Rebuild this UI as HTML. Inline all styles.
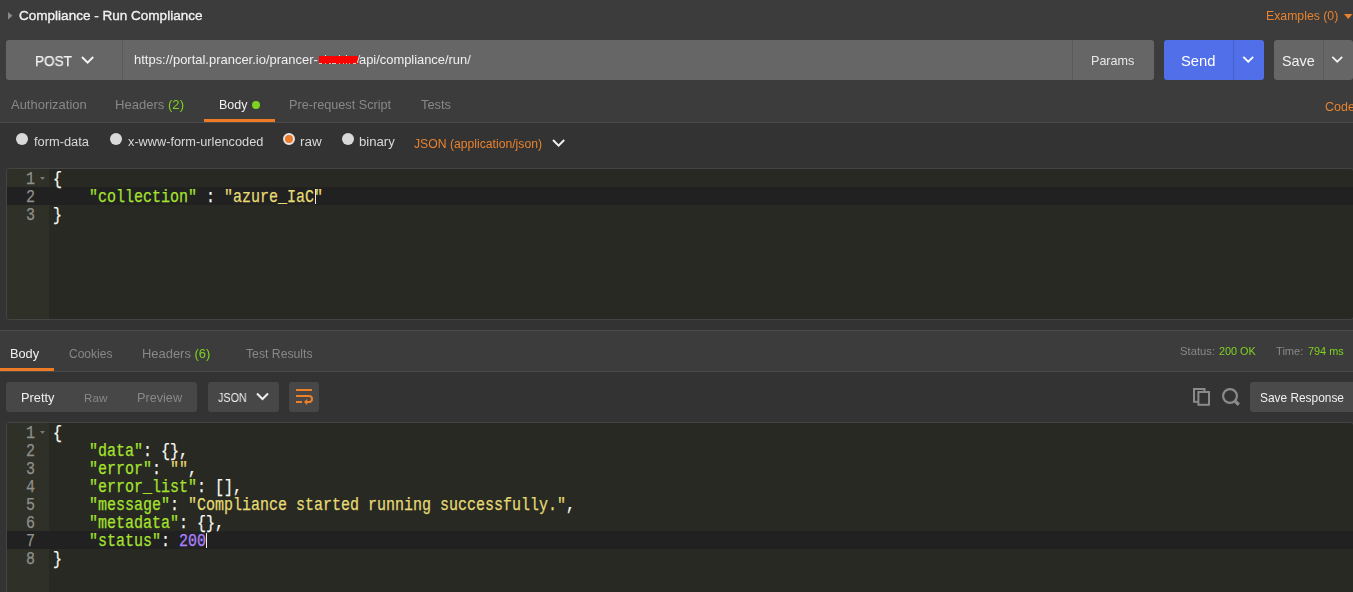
<!DOCTYPE html>
<html><head><meta charset="utf-8">
<style>
*{box-sizing:border-box;margin:0;padding:0}
html,body{width:1353px;height:592px;overflow:hidden;background:#333;font-family:"Liberation Sans",sans-serif;}
.abs{position:absolute;white-space:nowrap}
#top{position:absolute;left:0;top:0;width:1353px;height:123px;background:#3c3c3c}
#topline{position:absolute;left:0;top:122px;width:1353px;height:1px;background:#4a4a4a}
.t{position:absolute;white-space:nowrap;line-height:1;will-change:transform}
.method{position:absolute;left:6px;top:40px;width:116px;height:40px;background:#666;border-radius:3px 0 0 3px}
.url{position:absolute;left:122px;top:40px;width:950px;height:40px;background:#666;border-left:1px solid #5a5a5a}
.params{position:absolute;left:1072px;top:40px;width:82px;height:40px;background:#666;border-left:1px solid #5a5a5a;border-radius:0 3px 3px 0}
.send{position:absolute;left:1164px;top:40px;width:100px;height:40px;background:#516fe9;border-radius:3px}
.sendsplit{position:absolute;left:1233px;top:40px;width:1px;height:40px;background:#4460cf}
.save{position:absolute;left:1274px;top:40px;width:79px;height:40px;background:#666;border-radius:3px}
.savesplit{position:absolute;left:1323px;top:40px;width:1px;height:40px;background:#5a5a5a}
.editor{position:absolute;background:#282923;border:1px solid #444;border-radius:3px;overflow:hidden}
.gutter{position:absolute;left:0;top:0;bottom:0;width:42px;background:#2f3129}
.code{font-family:"Liberation Mono",monospace;font-size:18px;line-height:18px;-webkit-text-stroke:0.25px currentColor}
.ln{position:absolute;color:#8f908a;text-align:right;padding-top:1px;transform:scaleX(0.8333);transform-origin:right top}
.cl{position:absolute;white-space:pre;color:#f8f8f2;padding-top:1px;transform:scaleX(0.8333);transform-origin:left top}
.k{color:#a6e22e}.s{color:#e6db74}.n{color:#ae81ff}
#resp{position:absolute;left:0;top:330px;width:1353px;height:42px;background:#3c3c3c;border-top:1px solid #4a4a4a;border-bottom:1px solid #4a4a4a}
.btn{position:absolute;background:#474747;border-radius:3px}
.radio{width:12px;height:12px;border-radius:50%;background:#d9d9d9}
.radio.on{background:#ec7b2c;border:2px solid #e6e6e6}
</style></head><body>
<div id="top"></div><div id="topline"></div>
<svg class="abs" style="left:8px;top:12px" width="6" height="8"><path d="M0 0 L4.5 3.8 L0 7.6Z" fill="#8a8a8a"/></svg>
<div class="t" id="title" style="left:19.00px;top:9.35px;font-size:13.54px;color:#f0f0f0;-webkit-text-stroke:0.35px #f0f0f0;">Compliance - Run Compliance</div>
<div class="t" id="examples" style="left:1265.72px;top:9.75px;font-size:12.28px;color:#e8822e;">Examples (0)</div>
<svg class="abs" style="left:1344px;top:14px" width="9" height="6"><path d="M0 0 L8.5 0 L4.25 5Z" fill="#e8822e"/></svg>
<div class="method"></div><div class="url"></div><div class="params"></div>
<div class="t" id="post" style="left:34.80px;top:54.45px;font-size:14.00px;color:#f2f2f2;-webkit-text-stroke:0.25px #f2f2f2;transform:scaleX(0.97);transform-origin:0 0;">POST</div>
<svg class="abs" style="left:81px;top:55px" width="14" height="10"><path d="M1 2 L6.6 7.6 L12.2 2" stroke="#f2f2f2" stroke-width="2" fill="none"/></svg>
<div class="t" id="url1" style="left:133.85px;top:52.50px;font-size:12.98px;color:#f0f0f0;">https://portal.prancer.io/prancer-</div>
<div class="t" id="url2" style="left:359.30px;top:53.50px;font-size:12.90px;color:#f0f0f0;">api/compliance/run/</div>
<div class="abs" style="left:318.6px;top:56px;width:39.6px;height:7.7px;background:#f00;box-shadow:0 0 0 0.6px #5a6a6a"></div>
<div class="abs" style="left:325px;top:55px;width:1.2px;height:1.3px;background:#e8e8e8"></div>
<div class="abs" style="left:339px;top:55px;width:1.2px;height:1.3px;background:#e8e8e8"></div>
<div class="abs" style="left:346px;top:55px;width:1.2px;height:1.3px;background:#e8e8e8"></div>
<div class="abs" style="left:319px;top:63.2px;width:3px;height:1px;background:#c8c8c8"></div>
<div class="abs" style="left:325px;top:63.2px;width:1px;height:1px;background:#c8c8c8"></div>
<div class="abs" style="left:329px;top:63.2px;width:2px;height:1px;background:#c8c8c8"></div>
<div class="abs" style="left:332px;top:63.2px;width:3.5px;height:1px;background:#c8c8c8"></div>
<div class="abs" style="left:339px;top:63.2px;width:1px;height:1px;background:#c8c8c8"></div>
<div class="abs" style="left:343px;top:63.2px;width:1.2px;height:1px;background:#c8c8c8"></div>
<div class="abs" style="left:346px;top:63.2px;width:1px;height:1px;background:#c8c8c8"></div>
<div class="abs" style="left:349px;top:63.2px;width:1px;height:1px;background:#c8c8c8"></div>
<div class="abs" style="left:353px;top:63.2px;width:3px;height:1px;background:#c8c8c8"></div>
<div class="abs" style="left:358.3px;top:55px;width:1.2px;height:8px;background:#e0e0e0;transform:skewX(-18deg)"></div>
<div class="t" id="params" style="left:1090.96px;top:55.15px;font-size:12.57px;color:#e8e8e8;">Params</div>
<div class="send"></div><div class="sendsplit"></div>
<div class="t" id="send" style="left:1180.87px;top:53.65px;font-size:14.78px;color:#fff;">Send</div>
<svg class="abs" style="left:1242px;top:55px" width="13" height="9"><path d="M1.3 1.9 L6.25 6.7 L11.2 1.9" stroke="#fff" stroke-width="1.8" fill="none"/></svg>
<div class="save"></div><div class="savesplit"></div>
<div class="t" id="save" style="left:1282.24px;top:54.40px;font-size:14.40px;color:#f2f2f2;">Save</div>
<svg class="abs" style="left:1331px;top:55px" width="13" height="9"><path d="M1.3 1.9 L6.25 6.7 L11.2 1.9" stroke="#f2f2f2" stroke-width="1.8" fill="none"/></svg>
<div class="t" id="auth" style="left:11.00px;top:97.50px;font-size:12.98px;color:#888;">Authorization</div>
<div class="t" id="headers" style="left:115.25px;top:98.25px;font-size:13.07px;color:#888;">Headers <span style="color:#7ed321">(2)</span></div>
<div class="t" id="body" style="left:218.61px;top:99.25px;font-size:12.46px;color:#f0f0f0;">Body</div>
<div class="t" id="prereq" style="left:289.19px;top:98.95px;font-size:12.68px;color:#888;">Pre-request Script</div>
<div class="t" id="tests" style="left:420.94px;top:99.20px;font-size:12.85px;color:#888;">Tests</div>
<div class="t" id="codebtn" style="left:1325.10px;top:101.00px;font-size:12.50px;color:#e8822e;">Code</div>
<div class="abs" style="left:252px;top:101px;width:8px;height:8px;border-radius:50%;background:#7ed321"></div>
<div class="abs" style="left:204px;top:119px;width:71px;height:3px;background:#f07b27"></div>
<div class="abs radio" style="left:16px;top:133px"></div>
<div class="abs radio" style="left:110px;top:133px"></div>
<div class="abs radio on" style="left:283px;top:133px"></div>
<div class="abs radio" style="left:342px;top:133px"></div>
<div class="t" id="formdata" style="left:34.29px;top:136.05px;font-size:12.85px;color:#d8d8d8;">form-data</div>
<div class="t" id="urlenc" style="left:128.04px;top:136.15px;font-size:12.76px;color:#d8d8d8;">x-www-form-urlencoded</div>
<div class="t" id="raw" style="left:300.19px;top:135.00px;font-size:13.46px;color:#d8d8d8;">raw</div>
<div class="t" id="binary" style="left:359.21px;top:134.65px;font-size:13.16px;color:#d8d8d8;">binary</div>
<div class="t" id="jsonapp" style="left:414.21px;top:138.00px;font-size:12.19px;color:#e8822e;">JSON (application/json)</div>
<svg class="abs" style="left:552px;top:138px" width="14" height="10"><path d="M1 2 L6.6 7.6 L12.2 2" stroke="#f0f0f0" stroke-width="2" fill="none"/></svg>
<div class="editor" style="left:6px;top:168px;width:1348px;height:152px"><div class="gutter"></div><div class="abs" style="left:0;top:18px;width:1346px;height:18px;background:#212121"></div></div>
<div class="code">
<div class="ln" style="left:7px;top:169px;width:28px">1</div>
<div class="ln" style="left:7px;top:187px;width:28px">2</div>
<div class="ln" style="left:7px;top:205px;width:28px">3</div>
<svg class="abs" style="left:40px;top:177px" width="6" height="4"><path d="M0 0 L5 0 L2.5 3Z" fill="#777"/></svg>
<div class="cl" style="left:53px;top:169px">{</div>
<div class="cl" style="left:53px;top:187px">    <span class="k">"collection"</span> : <span class="s">"azure_IaC"</span></div>
<div class="cl" style="left:53px;top:205px">}</div>
</div>
<div class="abs" style="left:315px;top:189px;width:1px;height:15px;background:#e8e8e0"></div>
<div id="resp"></div>
<div class="t" id="rbody" style="left:9.94px;top:348.25px;font-size:12.75px;color:#f0f0f0;">Body</div>
<div class="t" id="cookies" style="left:68.99px;top:348.00px;font-size:12.02px;color:#888;">Cookies</div>
<div class="t" id="rheaders" style="left:142.35px;top:348.25px;font-size:12.95px;color:#888;">Headers <span style="color:#7ed321">(6)</span></div>
<div class="t" id="testres" style="left:245.75px;top:347.75px;font-size:12.22px;color:#888;">Test Results</div>
<div class="t" id="status" style="left:1179.87px;top:345.95px;font-size:11.26px;color:#888;">Status:</div>
<div class="t" id="statusv" style="left:1219.49px;top:345.70px;font-size:10.85px;color:#7ed321;">200 OK</div>
<div class="t" id="time" style="left:1276.24px;top:345.70px;font-size:11.14px;color:#888;">Time:</div>
<div class="t" id="timev" style="left:1308.49px;top:346.20px;font-size:10.90px;color:#7ed321;">794 ms</div>
<div class="abs" style="left:0;top:368px;width:54px;height:3px;background:#f07b27"></div>
<div class="btn" style="left:6px;top:382px;width:191px;height:30px"></div>
<div class="btn" style="left:208px;top:382px;width:71px;height:30px"></div>
<div class="btn" style="left:289px;top:382px;width:30px;height:30px"></div>
<div class="btn" style="left:1250px;top:382px;width:110px;height:30px;background:#4a4a4a"></div>
<div class="t" id="pretty" style="left:21.36px;top:391.50px;font-size:12.80px;color:#f0f0f0;">Pretty</div>
<div class="t" id="rawb" style="left:84.45px;top:392.00px;font-size:11.68px;color:#888;">Raw</div>
<div class="t" id="preview" style="left:137.28px;top:391.50px;font-size:12.68px;color:#888;">Preview</div>
<div class="t" id="json" style="left:217.50px;top:392.25px;font-size:12.60px;color:#f0f0f0;transform:scaleX(0.855);transform-origin:0 0;">JSON</div>
<div class="t" id="saveresp" style="left:1259.50px;top:393.25px;font-size:11.90px;color:#f0f0f0;">Save Response</div>
<svg class="abs" style="left:256px;top:392px" width="13" height="9"><path d="M1 1.5 L6.5 7 L12 1.5" stroke="#f0f0f0" stroke-width="2" fill="none"/></svg>
<svg class="abs" style="left:289px;top:382px" width="30" height="30"><path d="M7 8 H23 M7 14 H20 A3 3 0 0 1 20 20 H17.5 M7 20 H13" stroke="#ef7f25" stroke-width="2" fill="none"/><path d="M15 20 L18.2 16.8 L18.2 23.2Z" fill="#ef7f25"/></svg>
<svg class="abs" style="left:1193px;top:388px" width="18" height="18"><rect x="1" y="1" width="10.5" height="12.8" stroke="#8a8a8a" stroke-width="2" fill="none"/><rect x="5.4" y="4" width="10.6" height="12.8" stroke="#8a8a8a" stroke-width="2" fill="#333"/></svg>
<svg class="abs" style="left:1222px;top:388px" width="19" height="19"><circle cx="8" cy="8" r="6.9" stroke="#8a8a8a" stroke-width="2.2" fill="none"/><path d="M12.6 12.6 L16.8 16.8" stroke="#8a8a8a" stroke-width="3.4"/></svg>
<div class="editor" style="left:6px;top:422px;width:1348px;height:180px"><div class="gutter"></div><div class="abs" style="left:0;top:108px;width:1346px;height:18px;background:#212121"></div></div>
<div class="code">
<div class="ln" style="left:7px;top:423px;width:28px">1</div>
<div class="ln" style="left:7px;top:441px;width:28px">2</div>
<div class="ln" style="left:7px;top:459px;width:28px">3</div>
<div class="ln" style="left:7px;top:477px;width:28px">4</div>
<div class="ln" style="left:7px;top:495px;width:28px">5</div>
<div class="ln" style="left:7px;top:513px;width:28px">6</div>
<div class="ln" style="left:7px;top:531px;width:28px">7</div>
<div class="ln" style="left:7px;top:549px;width:28px">8</div>
<svg class="abs" style="left:40px;top:431px" width="6" height="4"><path d="M0 0 L5 0 L2.5 3Z" fill="#777"/></svg>
<div class="cl" style="left:53px;top:423px">{</div>
<div class="cl" style="left:53px;top:441px">    <span class="k">"data"</span>: {},</div>
<div class="cl" style="left:53px;top:459px">    <span class="k">"error"</span>: <span class="s">""</span>,</div>
<div class="cl" style="left:53px;top:477px">    <span class="k">"error_list"</span>: [],</div>
<div class="cl" style="left:53px;top:495px">    <span class="k">"message"</span>: <span class="s">"Compliance started running successfully."</span>,</div>
<div class="cl" style="left:53px;top:513px">    <span class="k">"metadata"</span>: {},</div>
<div class="cl" style="left:53px;top:531px">    <span class="k">"status"</span>: <span class="n">200</span></div>
<div class="cl" style="left:53px;top:549px">}</div>
</div>
<div class="abs" style="left:206px;top:533px;width:1.2px;height:15px;background:#f0f0e8"></div>
</body></html>
